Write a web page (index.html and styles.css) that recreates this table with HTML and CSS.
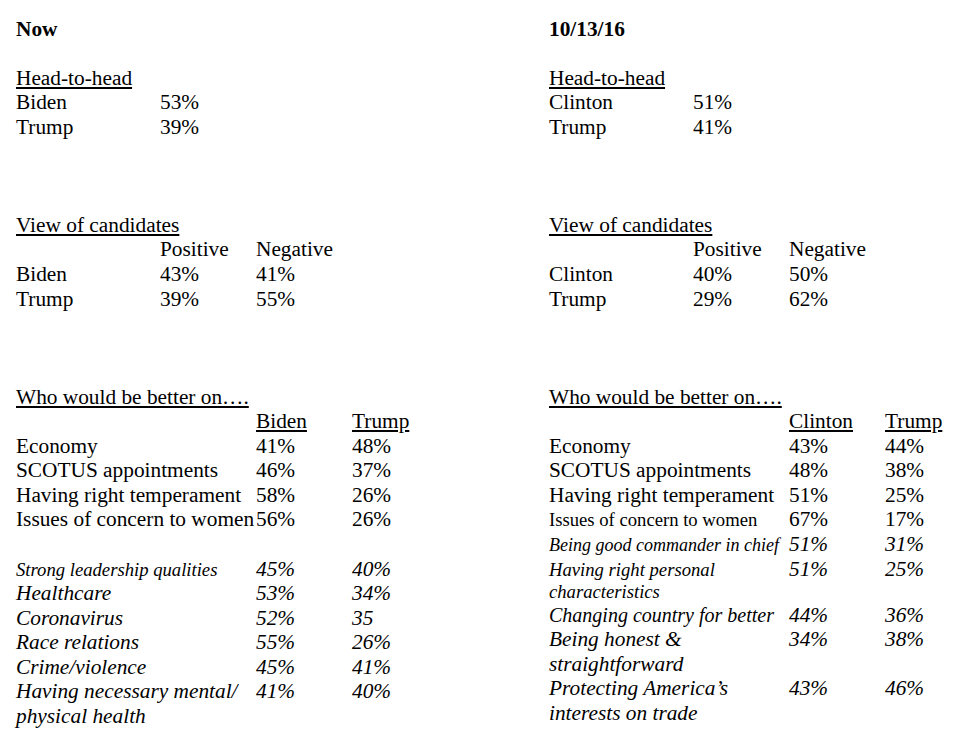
FILE: index.html
```html
<!DOCTYPE html>
<html lang="en">
<head>
<meta charset="utf-8">
<title>Poll comparison</title>
<link rel="stylesheet" href="styles.css">
</head>
<body>
<main class="page">
  <section class="half">
    <div class="date">Now</div>

    <div class="block first">
      <div class="title">Head-to-head</div>
      <div class="grid g-h2h">
        <div class="lbl">Biden</div><div>53%</div>
        <div class="lbl">Trump</div><div>39%</div>
      </div>
    </div>

    <div class="block spaced">
      <div class="title">View of candidates</div>
      <div class="grid g-view">
        <div></div><div>Positive</div><div>Negative</div>
        <div class="lbl">Biden</div><div>43%</div><div>41%</div>
        <div class="lbl">Trump</div><div>39%</div><div>55%</div>
      </div>
    </div>

    <div class="block spaced">
      <div class="title">Who would be better on….</div>
      <div class="grid g-better">
        <div></div><div class="u">Biden</div><div class="u">Trump</div>
        <div class="lbl">Economy</div><div>41%</div><div>48%</div>
        <div class="lbl">SCOTUS appointments</div><div>46%</div><div>37%</div>
        <div class="lbl">Having right temperament</div><div>58%</div><div>26%</div>
        <div class="lbl">Issues of concern to women</div><div>56%</div><div>26%</div>
        <div class="spacer"></div>
        <div class="lbl it s14">Strong leadership qualities</div><div class="it">45%</div><div class="it">40%</div>
        <div class="lbl it">Healthcare</div><div class="it">53%</div><div class="it">34%</div>
        <div class="lbl it">Coronavirus</div><div class="it">52%</div><div class="it">35</div>
        <div class="lbl it">Race relations</div><div class="it">55%</div><div class="it">26%</div>
        <div class="lbl it">Crime/violence</div><div class="it">45%</div><div class="it">41%</div>
        <div class="lbl it">Having necessary mental/<br>physical health</div><div class="it">41%</div><div class="it">40%</div>
      </div>
    </div>
  </section>

  <section class="half">
    <div class="date">10/13/16</div>

    <div class="block first">
      <div class="title">Head-to-head</div>
      <div class="grid g-h2h">
        <div class="lbl">Clinton</div><div>51%</div>
        <div class="lbl">Trump</div><div>41%</div>
      </div>
    </div>

    <div class="block spaced">
      <div class="title">View of candidates</div>
      <div class="grid g-view">
        <div></div><div>Positive</div><div>Negative</div>
        <div class="lbl">Clinton</div><div>40%</div><div>50%</div>
        <div class="lbl">Trump</div><div>29%</div><div>62%</div>
      </div>
    </div>

    <div class="block spaced">
      <div class="title">Who would be better on….</div>
      <div class="grid g-better">
        <div></div><div class="u">Clinton</div><div class="u">Trump</div>
        <div class="lbl">Economy</div><div>43%</div><div>44%</div>
        <div class="lbl">SCOTUS appointments</div><div>48%</div><div>38%</div>
        <div class="lbl">Having right temperament</div><div>51%</div><div>25%</div>
        <div class="lbl s14">Issues of concern to women</div><div>67%</div><div>17%</div>
        <div class="lbl it s13">Being good commander in chief</div><div class="it">51%</div><div class="it">31%</div>
        <div class="lbl it s14">Having right personal<br>characteristics</div><div class="it">51%</div><div class="it">25%</div>
        <div class="lbl it s15">Changing country for better</div><div class="it">44%</div><div class="it">36%</div>
        <div class="lbl it">Being honest &amp;<br>straightforward</div><div class="it">34%</div><div class="it">38%</div>
        <div class="lbl it">Protecting America’s<br>interests on trade</div><div class="it">43%</div><div class="it">46%</div>
      </div>
    </div>
  </section>
</main>
</body>
</html>
```

FILE: styles.css
```css
html, body {
  margin: 0;
  padding: 0;
  background: #ffffff;
}

body {
  font-family: "Liberation Serif", "Times New Roman", serif;
  font-size: 21.33px;
  line-height: 24.55px;
  color: #000000;
}

.page {
  display: grid;
  grid-template-columns: 533px 1fr;
  padding: 16.5px 0 0 16px;
}

.date {
  font-weight: bold;
}

.block.first {
  margin-top: 24.55px;
}

.block.spaced {
  margin-top: 73.65px;
}

.title {
  text-decoration: underline;
  white-space: nowrap;
}

.grid {
  display: grid;
  align-items: baseline;
}

.g-h2h {
  grid-template-columns: 144px auto;
}

.g-view {
  grid-template-columns: 144px 96px auto;
}

.g-better {
  grid-template-columns: 240px 96px auto;
}

.lbl {
  white-space: nowrap;
}

.u {
  text-decoration: underline;
}

.it {
  font-style: italic;
}

.s13 {
  font-size: 18px;
  line-height: 21px;
}

.s14 {
  font-size: 18.67px;
  line-height: 22px;
}

.s15 {
  font-size: 20px;
  line-height: 23px;
}

.spacer {
  grid-column: 1 / -1;
  height: 24.55px;
}
```
